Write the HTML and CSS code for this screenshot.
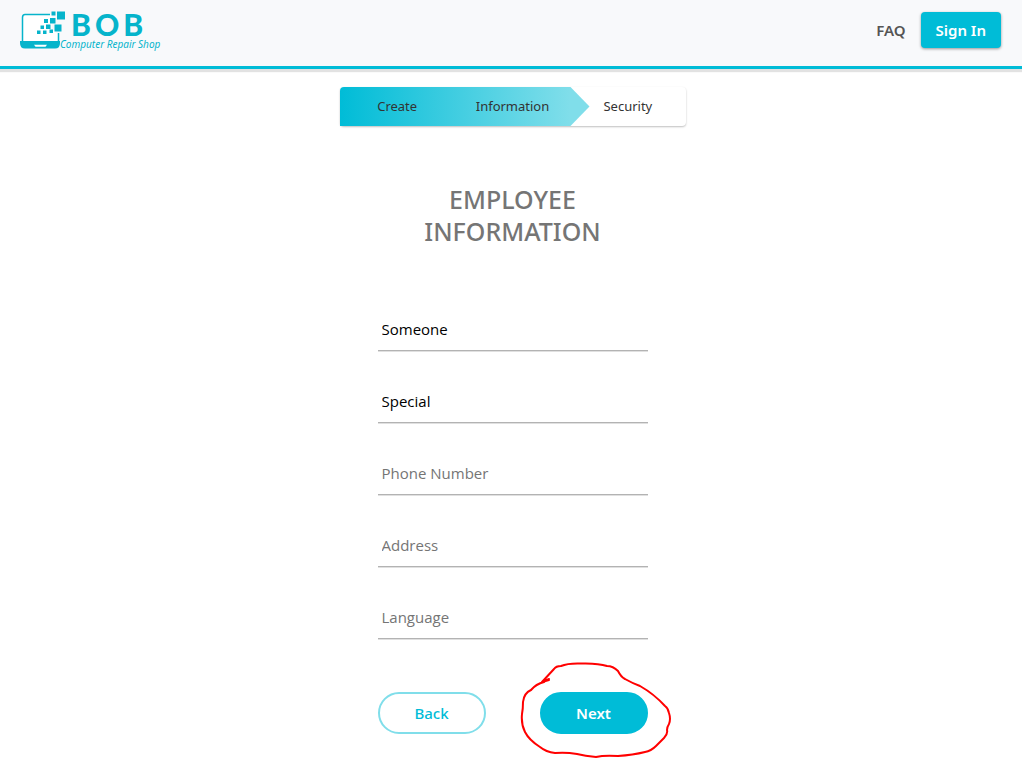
FILE: index.html
```html
<!DOCTYPE html>
<html lang="en">
<head>
<meta charset="utf-8">
<meta name="viewport" content="width=device-width, initial-scale=1">
<title>Employee Information</title>
<link rel="stylesheet" href="styles.css">
</head>
<body>
<header class="topbar">
  <a class="logo" href="#" aria-label="BOB Computer Repair Shop">
    <svg class="logo-art" width="142" height="42" viewBox="0 0 142 42">
      <path class="laptop-screen" d="M32 5H5Q2.500 5 2.500 8V31H38.500V24L32 20Z"/>
      <path class="laptop-line" d="M30 4.600H5Q2.500 4.600 2.500 7.500V31M38.500 23V31"/>
      <path class="logo-fill" d="M0 31H40V33Q40 38.500 35 38.500H5Q0 38.500 0 33Z"/>
      <path class="laptop-notch" d="M14 34.800H27L25.500 36.800H15.500Z"/>
      <path class="logo-fill" d="M37 1.500H45V9.500H37ZM31.500 1.500H35.500V5.500H31.500ZM30 8H35.500V13.500H30ZM24 9H28V13H24ZM34.500 14.500H41.500V21.500H34.500ZM26 14.500H30.500V19H26ZM20.500 15.500H24V19H20.500ZM29.500 19.500H33V23H29.500ZM23 20.500H26.500V24H23ZM17 20.500H20.500V24H17Z"/>
      <text class="logo-name" x="51" y="26">BOB</text>
      <text class="logo-tagline" x="40" y="38">Computer Repair Shop</text>
    </svg>
  </a>
  <nav class="nav">
    <a class="nav-link" href="#">FAQ</a>
    <button class="signin" type="button">Sign In</button>
  </nav>
</header>
<main class="page">
  <ol class="steps">
    <li class="step">Create</li>
    <li class="step" aria-current="step">Information</li>
    <li class="step">Security</li>
  </ol>
  <form class="form">
    <h1 class="title">EMPLOYEE INFORMATION</h1>
    <div class="fields">
      <input class="field" type="text" aria-label="First Name" value="Someone">
      <input class="field" type="text" aria-label="Last Name" value="Special">
      <input class="field" type="tel" aria-label="Phone Number" placeholder="Phone Number">
      <input class="field" type="text" aria-label="Address" placeholder="Address">
      <input class="field" type="text" aria-label="Language" placeholder="Language">
    </div>
    <div class="actions">
      <button class="pill pill-outline" type="button">Back</button>
      <div class="marked">
        <button class="pill pill-solid" type="button">Next</button>
        <svg class="marker" width="152" height="98" viewBox="0 0 152 98" aria-hidden="true">
          <path d="M29 18L22 20L34 7Q36 4 41 4Q48 1 61 1.500Q78 1 87 4Q93 4 98 9Q101 15 105 17Q112 21 120 24Q134 32 145 44Q148 46 149 51Q151 57 149 62Q147 65 147 68Q148 72 144 76L136 84Q131 89 125 90Q113 93 98 94Q84 93 76 95Q65 94 57 92Q46 90 35 91Q26 90 20 85Q9 78 5 70Q1 62 2 52Q3 47 3 40Q4 31 11 28Q16 22 24 20Q26 18 29 17"/>
        </svg>
      </div>
    </div>
  </form>
</main>
</body>
</html>
```
FILE: styles.css
```css
* { box-sizing: border-box; }

body {
  margin: 0;
  background: #fff;
  font-family: "Noto Sans", "Open Sans", sans-serif;
  font-size: 15px;
}

button, input { font: inherit; }

.topbar {
  display: flex;
  align-items: flex-start;
  justify-content: space-between;
  padding: 10px 21px 14px 20px;
  background: #f8f9fb;
  border-bottom: 3px solid #00bcd7;
  box-shadow: 0 3px 1px #e2e2e2;
}

.logo { display: block; }
.logo-art { display: block; overflow: visible; }
.logo-fill { fill: #06b4cb; }
.laptop-screen, .laptop-notch { fill: #fff; }
.laptop-line { fill: none; stroke: #06b4cb; stroke-width: 1.500; }
.logo-name {
  fill: #06b4cb;
  font-family: Lato, sans-serif;
  font-size: 30px;
  font-weight: 900;
  letter-spacing: 4px;
}
.logo-tagline {
  fill: #06b4cb;
  font-size: 10px;
  font-style: italic;
}

.nav {
  display: flex;
  align-items: center;
  gap: 15px;
  padding-top: 2px;
}
.nav-link {
  color: #555;
  font-weight: 600;
  text-decoration: none;
}
.signin {
  height: 36px;
  padding: 0 15px;
  border: 0;
  border-radius: 4px;
  background: #00bcd7;
  box-shadow: 0 1px 3px rgba(0, 0, 0, .4);
  color: #fff;
  font-weight: 600;
}

.page {
  display: flex;
  flex-direction: column;
  align-items: center;
  padding: 18px 13px 24px 16px;
}

.steps {
  position: relative;
  display: grid;
  grid-template-columns: repeat(3, 1fr);
  width: 100%;
  max-width: 346px;
  margin: 0;
  padding: 0;
  border-radius: 4px;
  box-shadow: 0 1px 2px rgba(0, 0, 0, .25);
  list-style: none;
  background: #fff;
}
.steps::before {
  content: "";
  position: absolute;
  inset: 0 96px 0 0;
  border-radius: 4px 0 0 0;
  background: linear-gradient(90deg, #00bcd7, #80deea 92%);
  clip-path: polygon(0 0, calc(100% - 19px) 0, 100% 50%, calc(100% - 19px) 100%, 0 100%);
}
.step {
  position: relative;
  color: #333;
  font-size: 13px;
  line-height: 39px;
  text-align: center;
}

.form {
  width: 100%;
  max-width: 270px;
}
.title {
  margin: 57px 0 62px;
  color: #757575;
  font-size: 25px;
  font-weight: 500;
  line-height: 32px;
  text-align: center;
}
.fields {
  display: grid;
  gap: 30px;
}
.field {
  width: 100%;
  height: 42px;
  padding: 0 4px 2px;
  border: 0;
  border-bottom: 1px solid #b3b3b3;
  border-radius: 0;
  box-shadow: 0 1px 0 #e0e0e0;
  background: transparent;
  color: #000;
  font-family: "Open Sans", sans-serif;
}
.field::placeholder { color: #757575; opacity: 1; }

.actions {
  display: flex;
  justify-content: space-between;
  margin-top: 53px;
}
.pill {
  width: 108px;
  height: 42px;
  border: 2px solid #80deea;
  border-radius: 21px;
  background: #fff;
  color: #00bcd7;
  font-weight: 500;
}
.pill-solid {
  border-color: #00bcd7;
  background: #00bcd7;
  color: #fff;
  font-weight: 600;
}
.marked { position: relative; }
.marker {
  position: absolute;
  top: -30px;
  left: -20px;
  pointer-events: none;
  fill: none;
  stroke: #f00;
  stroke-width: 2;
  stroke-linecap: round;
  stroke-linejoin: round;
}
```
